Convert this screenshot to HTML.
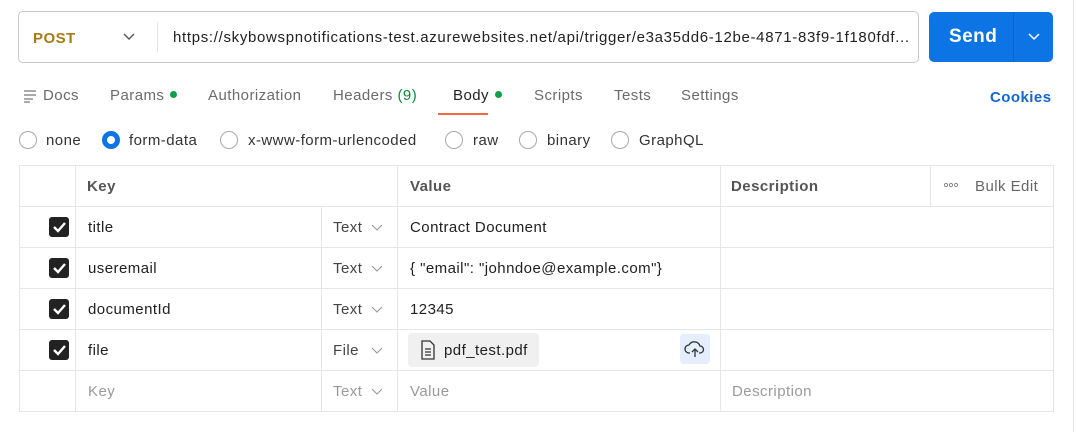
<!DOCTYPE html><html><head><style>
*{box-sizing:border-box;margin:0;padding:0}
body{width:1077px;height:432px;background:#fff;font-family:"Liberation Sans",sans-serif;color:#212121;position:relative;overflow:hidden;letter-spacing:0.45px}
.a{position:absolute;white-space:nowrap}
.url{left:18px;top:11px;width:901px;height:52px;border:1px solid #c8c8c8;border-radius:5px}
.send{left:929px;top:12px;width:124px;height:50px;background:#0c74e4;border-radius:5px}
.tab{top:87px;font-size:15px;color:#6b6b6b}
.dot{display:inline-block;width:7px;height:7px;border-radius:50%;background:#0ca04a;margin-left:6px;vertical-align:2px}
.rad{top:131px;width:18px;height:18px;border:1px solid #a8a8a8;border-radius:50%}
.rl{top:132px;font-size:15px;color:#333}
.h{position:absolute;background:#e6e6e6}
.cb{position:absolute;left:49px;width:20px;height:20px;background:#222;border-radius:3px}
.t{font-size:15px}
.g{color:#9a9a9a}
</style></head><body>
<div class="a url"></div>
<div class="a" style="left:33px;top:30px;font-size:15px;font-weight:bold;color:#a97a12">POST</div>
<svg class="a" style="left:122px;top:32px" width="14" height="10"><path d="M2 2l5 5 5-5" fill="none" stroke="#555" stroke-width="1.4"/></svg>
<div class="h" style="left:157px;top:22px;width:1px;height:30px"></div>
<div class="a" style="left:173px;top:29px;font-size:15px;color:#222;letter-spacing:0.68px">https://skybowspnotifications-test.azurewebsites.net/api/trigger/e3a35dd6-12be-4871-83f9-1f180fdf...</div>
<div class="a send"></div>
<div class="a" style="left:949px;top:26px;font-size:19px;font-weight:bold;color:#fff">Send</div>
<div class="a" style="left:1013px;top:12px;width:1px;height:50px;background:#0a66c8"></div>
<svg class="a" style="left:1027px;top:32px" width="14" height="10"><path d="M2 2l5 5 5-5" fill="none" stroke="#fff" stroke-width="1.5"/></svg>
<svg class="a" style="left:24px;top:89px" width="14" height="14"><path d="M0 2h12M0 6h12M0 10h9M0 13h6" stroke="#777" stroke-width="1.3"/></svg>
<div class="a tab" style="left:43px">Docs</div>
<div class="a tab" style="left:110px">Params<span class="dot"></span></div>
<div class="a tab" style="left:208px">Authorization</div>
<div class="a tab" style="left:333px">Headers <span style="color:#0a8a3a">(9)</span></div>
<div class="a tab" style="left:453px;color:#222">Body<span class="dot"></span></div>
<div class="a" style="left:438px;top:113px;width:50px;height:2px;background:#f26b3a"></div>
<div class="a tab" style="left:534px">Scripts</div>
<div class="a tab" style="left:614px">Tests</div>
<div class="a tab" style="left:681px">Settings</div>
<div class="a" style="left:990px;top:89px;font-size:15px;font-weight:bold;color:#1466d0">Cookies</div>
<div class="a rad" style="left:19px"></div><div class="a rl" style="left:46px">none</div>
<div class="a rad" style="left:102px;border:5px solid #0c74e4"></div><div class="a rl" style="left:129px">form-data</div>
<div class="a rad" style="left:220px"></div><div class="a rl" style="left:248px">x-www-form-urlencoded</div>
<div class="a rad" style="left:445px"></div><div class="a rl" style="left:473px">raw</div>
<div class="a rad" style="left:519px"></div><div class="a rl" style="left:547px">binary</div>
<div class="a rad" style="left:611px"></div><div class="a rl" style="left:639px">GraphQL</div>
<div class="a" style="left:1073px;top:0;width:1px;height:432px;background:#e8e8e8"></div>
<div class="a" style="left:19px;top:165px;width:1035px;height:247px;border:1px solid #e6e6e6"></div>
<div class="h" style="left:19px;top:206px;width:1035px;height:1px"></div>
<div class="h" style="left:19px;top:247px;width:1035px;height:1px"></div>
<div class="h" style="left:19px;top:288px;width:1035px;height:1px"></div>
<div class="h" style="left:19px;top:329px;width:1035px;height:1px"></div>
<div class="h" style="left:19px;top:370px;width:1035px;height:1px"></div>
<div class="h" style="left:75px;top:165px;width:1px;height:246px"></div>
<div class="h" style="left:321px;top:206px;width:1px;height:205px"></div>
<div class="h" style="left:397px;top:165px;width:1px;height:246px"></div>
<div class="h" style="left:720px;top:165px;width:1px;height:246px"></div>
<div class="h" style="left:930px;top:165px;width:1px;height:41px"></div>
<div class="a t" style="left:87px;top:178px;font-weight:bold;color:#555">Key</div>
<div class="a t" style="left:410px;top:178px;font-weight:bold;color:#555">Value</div>
<div class="a t" style="left:731px;top:178px;font-weight:bold;color:#555">Description</div>
<svg class="a" style="left:943px;top:182px" width="16" height="6"><g fill="none" stroke="#888" stroke-width="1"><circle cx="3" cy="3" r="1.6"/><circle cx="8" cy="3" r="1.6"/><circle cx="13" cy="3" r="1.6"/></g></svg>
<div class="a t" style="left:975px;top:178px;color:#666">Bulk Edit</div>
<div class="cb" style="top:217px"></div><div class="cb" style="top:258px"></div><div class="cb" style="top:299px"></div><div class="cb" style="top:340px"></div>
<svg class="a" style="left:49px;top:217px" width="20" height="164"><g fill="none" stroke="#fff" stroke-width="2.4"><path d="M5 10l4 4 7-8"/><path d="M5 51l4 4 7-8"/><path d="M5 92l4 4 7-8"/><path d="M5 133l4 4 7-8"/></g></svg>
<div class="a t" style="left:88px;top:219px">title</div>
<div class="a t" style="left:88px;top:260px">useremail</div>
<div class="a t" style="left:88px;top:301px">documentId</div>
<div class="a t" style="left:88px;top:342px">file</div>
<div class="a t g" style="left:88px;top:383px">Key</div>
<div class="a t" style="left:333px;top:219px;color:#444">Text</div>
<div class="a t" style="left:333px;top:260px;color:#444">Text</div>
<div class="a t" style="left:333px;top:301px;color:#444">Text</div>
<div class="a t" style="left:333px;top:342px;color:#444">File</div>
<div class="a t g" style="left:333px;top:383px">Text</div>
<svg class="a" style="left:370px;top:222px" width="14" height="180"><g fill="none" stroke="#999" stroke-width="1.1"><path d="M2 3l5 5 5-5"/><path d="M2 44l5 5 5-5"/><path d="M2 85l5 5 5-5"/><path d="M2 126l5 5 5-5"/><path d="M2 167l5 5 5-5"/></g></svg>
<div class="a t" style="left:410px;top:219px">Contract Document</div>
<div class="a t" style="left:410px;top:260px">{ "email": "johndoe@example.com"}</div>
<div class="a t" style="left:410px;top:301px">12345</div>
<div class="a" style="left:408px;top:333px;width:131px;height:34px;background:#f0f0f0;border-radius:4px"></div>
<svg class="a" style="left:420px;top:340px" width="16" height="20"><path d="M2 1h8l4 4v14H2z" fill="none" stroke="#333" stroke-width="1.3"/><path d="M5 9h6M5 12h6M5 15h6" stroke="#333" stroke-width="1.2"/></svg>
<div class="a t" style="left:444px;top:342px">pdf_test.pdf</div>
<div class="a" style="left:680px;top:334px;width:30px;height:30px;background:#e4eefc;border-radius:4px"></div>
<svg class="a" style="left:684px;top:339px" width="22" height="20"><path d="M6 14H5a4 4 0 0 1 0-8 6 6 0 0 1 11 1 3.5 3.5 0 0 1 0 7h-1" fill="none" stroke="#333" stroke-width="1.3"/><path d="M11 18V10M8 13l3-3 3 3" fill="none" stroke="#333" stroke-width="1.3"/></svg>
<div class="a t g" style="left:410px;top:383px">Value</div>
<div class="a t g" style="left:732px;top:383px">Description</div>
</body></html>
